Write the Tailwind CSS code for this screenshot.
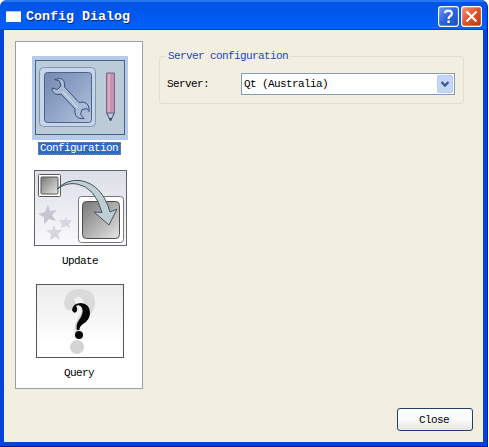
<!DOCTYPE html>
<html lang="en">
<head>
<meta charset="utf-8">
<title>Config Dialog</title>
<script src="https://cdn.jsdelivr.net/npm/@tailwindcss/browser@4"></script>
</head>
<body class="w-[489px] h-[447px] overflow-hidden bg-white font-['Liberation_Mono',monospace] text-[11px] leading-[14px] tracking-[-0.6px] text-black">
<main class="w-[488px] h-[447px] flex flex-col rounded-t-[7px] bg-[#0643d9] px-1 pb-1 border-r border-b border-[#001fa0] overflow-hidden">
  <header class="-mx-1 h-[30px] shrink-0 flex items-center pl-[6px] pr-[5px] pt-[2px] bg-linear-to-b from-[#0054e3] from-0% via-[#0058ee] via-50% to-[#0062fb] border-t-2 border-b border-t-[#2877f0] border-b-[#0346c8]">
    <svg class="w-[15px] h-[12px] mr-[5px]" viewBox="0 0 15 12"><rect y="1" width="15" height="10" fill="#fff"/><path d="M0 .5h15" stroke="#a9c8ff"/></svg>
    <h1 class="text-[13.33px] leading-[18px] tracking-normal font-bold text-white [text-shadow:1px_1px_0_#0a2a80]">Config Dialog</h1>
    <div class="ml-auto flex gap-[2px]">
      <button aria-label="Help" class="size-[21px]"><svg viewBox="0 0 21 21"><defs><linearGradient id="hb" x2="1" y2="1"><stop stop-color="#6f9bf3"/><stop offset=".5" stop-color="#2c62dc"/><stop offset="1" stop-color="#1a4cc4"/></linearGradient></defs><rect x=".6" y=".6" width="19.8" height="19.8" rx="2.6" fill="url(#hb)" stroke="#fff" stroke-width="1.1"/><path d="M7 7.2Q7.2 4.7 10.4 4.7Q14 4.8 13.9 7.6Q13.8 9.3 12 10.2Q10.6 11 10.6 13" fill="none" stroke="#fff" stroke-width="2.2"/><path d="M9.4 14.6h2.4v2.3H9.4z" fill="#fff"/></svg></button>
      <button aria-label="Close window" class="size-[21px]"><svg viewBox="0 0 21 21"><defs><linearGradient id="cb" x2="1" y2="1"><stop stop-color="#f09a7d"/><stop offset=".5" stop-color="#e1512c"/><stop offset="1" stop-color="#bd3209"/></linearGradient></defs><rect x=".6" y=".6" width="19.8" height="19.8" rx="2.6" fill="url(#cb)" stroke="#fff" stroke-width="1.1"/><path d="M5.5 5.5l10 10m0-10l-10 10" stroke="#fff" stroke-width="2.2"/></svg></button>
    </div>
  </header>
  <div class="flex-1 flex bg-[#f2eee0] pl-[11px] pt-[11px]">
    <nav class="w-[128px] h-[348px] shrink-0 flex flex-col items-center bg-white border border-[#93a0ac]">
      <div class="mt-[14px] ml-[2px] h-[114px] flex flex-col items-center">
        <svg class="w-[96px] h-[84px]" viewBox="0 0 96 84">
          <defs><linearGradient id="g1" x2="1" y2="1"><stop stop-color="#7389b0"/><stop offset=".5" stop-color="#90a4c8"/><stop offset="1" stop-color="#b6c4dc"/></linearGradient></defs>
          <path d="M0 0h96v84H0z" fill="#b5cbe8"/>
          <rect x="3.500" y="4.500" width="89" height="74" fill="#bccbd8" stroke="#4a5f80"/>
          <rect x="7.500" y="11.500" width="56" height="59" rx="4" fill="#c6d5e8" stroke="#8094b4"/>
          <rect x="12.500" y="16.500" width="47" height="50" rx="3" fill="url(#g1)" stroke="#4c628c"/>
          <path d="M22.500 23.500l5 1.500 1.500 5-3.500 3.500-5.500-1.500q0 6 6 6.500l3-.5 14 15q-1 8 5 9.500h4l-3.500-4 1.500-5 5-1 2 3q1-8-6-9.500l-4 .5-14.500-15.500q1-7-4-8.500z" fill="#aabcd8" stroke="#3b5178"/>
          <path d="M31 36l15 16" stroke="#dce7f5"/>
          <path d="M74.500 17h8v40l-4 8-4-8z" fill="#c792ac" stroke="#73678c"/>
          <path d="M77 18v38" stroke="#dbadc0" stroke-width="2"/><path d="M75 57l3.500 8 3.500-8z" fill="#c2cbd9" stroke="#57678b"/><path d="M77 62l1.500 3 1.500-3z" fill="#31466c"/>
        </svg>
        <span class="mt-[2px] h-[13px] leading-[13px] pl-[2px] pr-[3px] -ml-[1px] bg-[#316ac5] text-white whitespace-nowrap outline-dotted outline-1 -outline-offset-1 outline-[#7a8fb0]">Configuration</span>
      </div>
      <div class="h-[114px] flex flex-col items-center">
        <svg class="w-[94px] h-[77px] ml-[4px]" viewBox="0 0 94 77">
          <defs><linearGradient id="g3" x2="1" y2="1"><stop stop-color="#777"/><stop offset="1" stop-color="#e6e6e6"/></linearGradient><linearGradient id="g4" x2="0" y2="1"><stop stop-color="#dcdee8"/><stop offset="1" stop-color="#faf9fc"/></linearGradient></defs>
          <rect x=".5" y=".5" width="92" height="75" fill="url(#g4)" stroke="#62626b"/>
          <path d="M14 35l2 6 7-1-5 5 4 6-7-2-5 5v-7l-6-3 7-2z" fill="#c6c6d3"/><path d="M20 55l2 5 6 0-4 4 2 6-5-3-5 3 1-6-5-4h6zM32 47l1 3 5 0-3 4 1 4-4-2-5 2 1-4-3-4h5z" fill="#d6d6e1"/>
          <rect x="4.500" y="4.500" width="22" height="22" rx="1" fill="#fff" stroke="#555"/><rect x="7" y="7" width="17" height="17" rx="1" fill="url(#g3)" stroke="#555"/>
          <rect x="44.500" y="26.500" width="45" height="46" rx="3" fill="#fff" stroke="#777"/><rect x="48.500" y="31.500" width="37" height="37" rx="4" fill="url(#g3)" stroke="#4d4d4d"/>
          <path d="M23 19Q33 9 46 10.500Q68 14 76 42l7-3-8 16-15-13 8 .5Q61 17 43 14Q33 12 23 19z" fill="#bdcfd3" stroke="#44545c"/>
        </svg>
        <span class="mt-[7px] ml-[2px]">Update</span>
      </div>
      <div class="flex flex-col items-center">
        <svg class="w-[89px] h-[75px] ml-[2px]" viewBox="0 0 89 75">
          <defs><linearGradient id="g5" x2="0" y2="1"><stop stop-color="#ebebeb"/><stop offset=".8" stop-color="#fff"/></linearGradient></defs>
          <rect x=".5" y=".5" width="87" height="73" fill="url(#g5)" stroke="#555"/>
          <path d="M28 20Q29 6 43 5Q59 5 59 19Q59 28 48 37Q43 41 43 51H39Q37 42 42 34Q49 24 47 16Q44 10 38 15L40 20Q37 29 30 25z" fill="#dadada"/><circle cx="41" cy="63" r="7" fill="#d4d4d4"/>
          <path d="M36 26Q37 19 45 19Q54 20 54 29Q54 36 47 40Q43 43 43.500 46H41Q39.500 41 43 36Q48 29 46 24Q44 20 40 22Q42 24 41 27Q38 31 36 26z" fill="#080808"/><circle cx="43" cy="51" r="4" fill="#080808"/>
        </svg>
        <span class="mt-[7px]">Query</span>
      </div>
    </nav>
    <section class="flex-1 flex flex-col">
      <div class="ml-[16px] mt-[15px] w-[305px] h-[48px] shrink-0 border border-[#e3dfd0] rounded-[3px] flex flex-col">
        <h2 class="self-start ml-[6px] -mt-[8px] pl-[2px] pr-[2px] bg-[#f2eee0] text-[#1848c8] whitespace-pre">Server configuration</h2>
        <div class="mt-[10px] flex items-center pl-[7px]">
          <label for="server" class="w-[74px]">Server:</label>
          <button id="server" class="w-[214px] h-[22px] flex items-center justify-between bg-white border border-[#7f9db9] pl-[2px] pr-px text-left tracking-[-0.6px]">Qt (Australia)<svg class="w-[16px] h-[18px]" viewBox="0 0 16 18"><rect x=".5" y=".5" width="15" height="17" rx="1.500" fill="#c5d5fc" stroke="#b3c8f6"/><path d="M4.500 7l3.500 3.500L11.500 7" fill="none" stroke="#435c88" stroke-width="2.400"/></svg></button>
        </div>
      </div>
      <button class="mt-auto ml-auto mr-[10px] mb-[11px] w-[76px] h-[23px] rounded-[3px] border border-[#213f68] bg-linear-to-b from-white via-[#fbfafa] to-[#e6e4ea] pr-[2px] tracking-[-0.6px]">Close</button>
    </section>
  </div>
</main>
</body>
</html>
